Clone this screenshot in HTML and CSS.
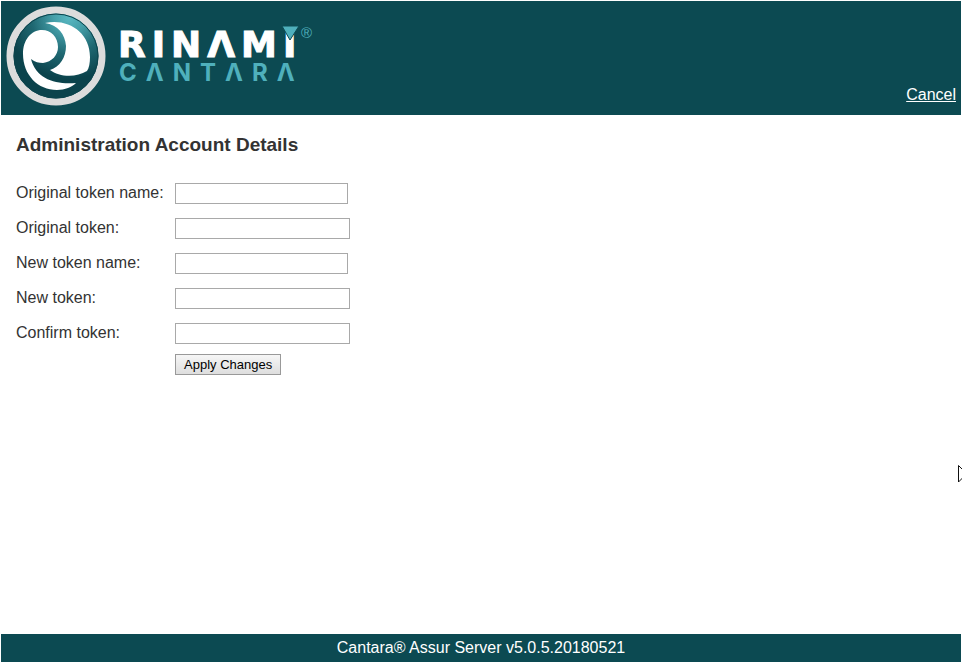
FILE: index.html
```html
<!DOCTYPE html>
<html lang="en">
<head>
    <meta charset="utf-8">
    <title>Administration Account Details</title>
    <link rel="stylesheet" href="styles.css">
</head>
<body>

<header class="header">
    <svg class="logo" width="320" height="112" viewBox="0 0 320 112" role="img" aria-label="Rinami Cantara">
        <defs>
            <radialGradient id="wave" gradientUnits="userSpaceOnUse" cx="68" cy="16" r="62">
                <stop offset="0" stop-color="#5ab8c2"/>
                <stop offset="0.25" stop-color="#459fa9"/>
                <stop offset="0.6" stop-color="#1f6872"/>
                <stop offset="1" stop-color="#0b434c"/>
            </radialGradient>
        </defs>
        <circle cx="55" cy="55" r="46" fill="url(#wave)" stroke="#dcdcdc" stroke-width="7"/>
        <circle cx="55" cy="55" r="42" fill="none" stroke="#0b434c"/>
        <path fill="#fff" d="M30 58C34 61 38 62 42 62C51 61 57 54 57 46C57 36 50 29 41 29C30 29 22 39 22 53C22 74 37 89 56 89C64 89 71 86 75 82C55 84 35 78 30 58Z"/>
        <path fill="#fff" d="M44 22C67 17 89 31 89 56C89 62 88 67 86 70C75 77 58 76 49 69C59 66 65 56 65 45C64 33 57 24 44 22Z"/>
        <text class="logo-name" x="117" y="56">RINΛMI</text>
        <text class="logo-product" x="118" y="80">CΛNTΛRΛ</text>
        <path fill="#4fb0bc" stroke="#0c4a52" d="M281 25H298L289 39Z"/>
        <text class="logo-mark" x="300" y="37">®</text>
    </svg>
    <a class="cancel" href="#">Cancel</a>
</header>

<main class="content">
    <h1>Administration Account Details</h1>
    <form class="account-form">
        <label for="oldName">Original token name:</label>
        <input class="name-box" type="text" id="oldName">
        <label for="oldToken">Original token:</label>
        <input class="token-box" type="password" id="oldToken">
        <label for="newName">New token name:</label>
        <input class="name-box" type="text" id="newName">
        <label for="newToken">New token:</label>
        <input class="token-box" type="password" id="newToken">
        <label for="confirmToken">Confirm token:</label>
        <input class="token-box" type="password" id="confirmToken">
        <button type="submit" class="applyBtn">Apply Changes</button>
    </form>
</main>

<footer class="footer">Cantara® Assur Server v5.0.5.20180521</footer>

<svg class="pointer" width="4" height="18" viewBox="0 0 4 18" aria-hidden="true">
    <path d="M0.5 17V0.5L5 5M0.5 17L4.5 13" fill="none" stroke="#111"/>
</svg>

</body>
</html>
```
FILE: styles.css
```css
* {
    box-sizing: border-box;
}
body {
    font-family: "Liberation Sans", Arial, sans-serif;
    font-size: 16px;
    line-height: 20px;
    color: #333;
    background-color: #fff;
    display: flex;
    flex-direction: column;
    min-height: 100vh;
    margin: 0;
    padding: 1px 2px 3px 1px;
}
.header {
    display: flex;
    justify-content: space-between;
    align-items: flex-end;
    background-color: #0c4a52;
    padding: 0 5px 2px 0;
}
.logo {
    display: block;
}
.logo-name {
    font-family: "DejaVu Sans", sans-serif;
    font-size: 36px;
    font-weight: bold;
    letter-spacing: 6px;
    fill: #fff;
    stroke: #fff;
    stroke-width: 1px;
}
.logo-product {
    font-family: Inter, sans-serif;
    font-size: 24px;
    font-weight: bold;
    letter-spacing: 9px;
    fill: #4fb0bc;
}
.logo-mark {
    font-size: 15px;
    fill: #4fb0bc;
}
.cancel {
    color: #fff;
    margin-bottom: 8px;
}
.content {
    flex: 1;
    padding: 20px 15px;
}
h1 {
    font-size: 19px;
    line-height: 20px;
    margin: 0 0 21px;
}
.account-form {
    display: grid;
    grid-template-columns: 147px 1fr;
    grid-auto-rows: 35px;
    column-gap: 12px;
    align-items: center;
    justify-items: start;
}
.account-form label {
    white-space: nowrap;
    padding-bottom: 2px;
}
.name-box,
.token-box {
    height: 21px;
    padding: 1px;
    border: 1px solid #a9a9a9;
    background-color: #fff;
}
.name-box {
    width: 173px;
}
.token-box {
    width: 175px;
}
.applyBtn {
    grid-column: 2;
    align-self: start;
    height: 21px;
    margin-top: 3px;
    padding: 0 8px;
    border: 1px solid #999;
    background: linear-gradient(#f6f6f6, #dedede);
    color: #000;
    font-family: inherit;
    font-size: 13px;
}
.footer {
    background-color: #0c4a52;
    color: #fff;
    text-align: center;
    padding: 4px 0;
}
/* mouse pointer resting on the right edge of the window */
.pointer {
    position: absolute;
    right: 1px;
    top: 465px;
}
```
